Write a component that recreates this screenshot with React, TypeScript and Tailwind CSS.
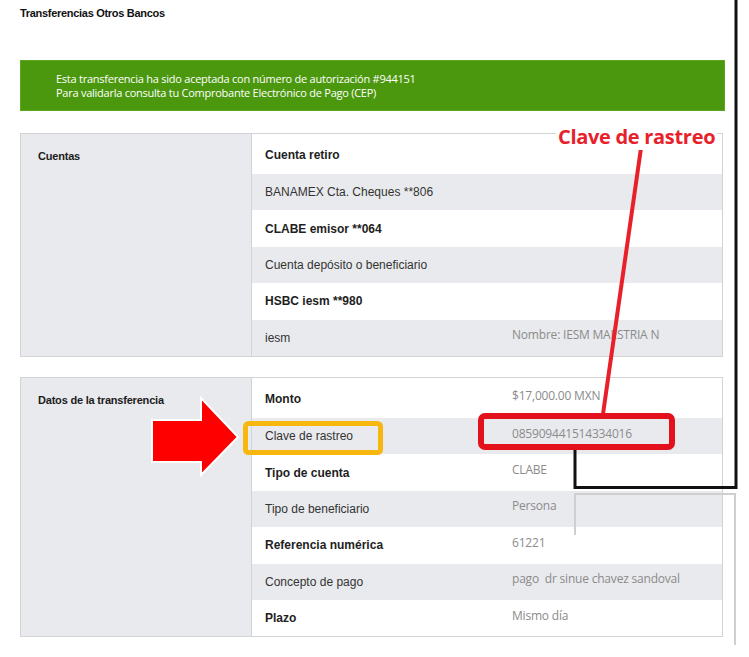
import React from 'react';

type Row = { label: string; bold?: boolean; value?: string };

const cuentas: Row[] = [
  { label: 'Cuenta retiro', bold: true },
  { label: 'BANAMEX Cta. Cheques **806' },
  { label: 'CLABE emisor **064', bold: true },
  { label: 'Cuenta depósito o beneficiario' },
  { label: 'HSBC iesm **980', bold: true },
  { label: 'iesm', value: 'Nombre: IESM MAESTRIA N' },
];

const datos: Row[] = [
  { label: 'Monto', bold: true, value: '$17,000.00 MXN' },
  { label: 'Clave de rastreo', value: '085909441514334016' },
  { label: 'Tipo de cuenta', bold: true, value: 'CLABE' },
  { label: 'Tipo de beneficiario', value: 'Persona' },
  { label: 'Referencia numérica', bold: true, value: '61221' },
  { label: 'Concepto de pago', value: 'pago  dr sinue chavez sandoval' },
  { label: 'Plazo', bold: true, value: 'Mismo día' },
];

const Section = ({ title, rows }: { title: string; rows: Row[] }) => (
  <div className="ml-[20px] w-[703px] flex border-[1.5px] border-[#d2d3d5]">
    <div className="w-[231px] shrink-0 bg-[#e9eaed] border-r-[1.5px] border-[#d2d3d5] pl-[17px] pt-[9px]">
      <span className="text-[11px] font-bold text-[#1c1c1c] tracking-[-0.2px] leading-[14px]">{title}</span>
    </div>
    <div className="flex-1 flex flex-col">
      {rows.map((r, i) => (
        <div
          key={r.label}
          className={`flex items-center ${i === 0 ? 'h-[40px] pt-[2px]' : 'h-[36.4px]'} ${i % 2 === 1 ? 'bg-[#e9eaed]' : 'bg-white'}`}
        >
          <span
            className={`w-[260px] shrink-0 pl-[13px] text-[12px] ${r.bold ? 'font-bold text-[#1e1e1e]' : 'text-[#333]'}`}
          >
            {r.label}
          </span>
          {r.value && (
            <span className="mb-[5px] whitespace-pre text-[12px] text-[#8b8b8b] font-['Open_Sans',sans-serif] tracking-[-0.2px]">
              {r.value}
            </span>
          )}
        </div>
      ))}
    </div>
  </div>
);

export default function App() {
  return (
    <div className="relative w-[749px] h-[657px] overflow-hidden bg-white font-['Liberation_Sans',Arial,sans-serif]">
      <div className="h-[24px] pl-[20px] pt-[5px] text-[11px] font-bold text-[#111] tracking-[-0.3px]">
        Transferencias Otros Bancos
      </div>

      <div className="mt-[36px] ml-[20px] w-[705px] h-[51px] bg-[#4b980e] border border-[#5aa71d] flex flex-col justify-center pl-[35px] text-white text-[11px] leading-[14px] font-['Open_Sans',sans-serif] tracking-[-0.25px]">
        <p>Esta transferencia ha sido aceptada con número de autorización #944151</p>
        <p>Para validarla consulta tu Comprobante Electrónico de Pago (CEP)</p>
      </div>

      <div className="mt-[22px]">
        <Section title="Cuentas" rows={cuentas} />
      </div>
      <div className="mt-[20px]">
        <Section title="Datos de la transferencia" rows={datos} />
      </div>

      <svg className="absolute inset-0 pointer-events-none" width="749" height="657" viewBox="0 0 749 657">
        <g stroke="#cfcfcf" strokeWidth="2" fill="none">
          <polyline points="575,535 575,494 735,494 735,645" />
        </g>
        <polyline points="575,447 575,487.5 736,487.5 736,0" stroke="#111" strokeWidth="3" fill="none" />
        <line x1="641" y1="148" x2="603" y2="414" stroke="#e8202a" strokeWidth="4" />
        <rect x="481" y="416" width="191" height="31" rx="4" fill="none" stroke="#e3111b" strokeWidth="6" />
        <rect x="245.5" y="423.5" width="135" height="29" rx="3" fill="none" stroke="#f7b70f" strokeWidth="5" />
        <polygon
          points="152,420 201,420 201,398 238,437 201,475 201,462 152,462"
          fill="#fe0000"
          stroke="#fff"
          strokeWidth="2"
        />
      </svg>

      <div className="absolute left-[556px] top-[124px] bg-white px-[2px] text-[20px] leading-[26px] font-bold text-[#e8202a] font-['Open_Sans',sans-serif] tracking-[-0.3px]">
        Clave de rastreo
      </div>
    </div>
  );
}
